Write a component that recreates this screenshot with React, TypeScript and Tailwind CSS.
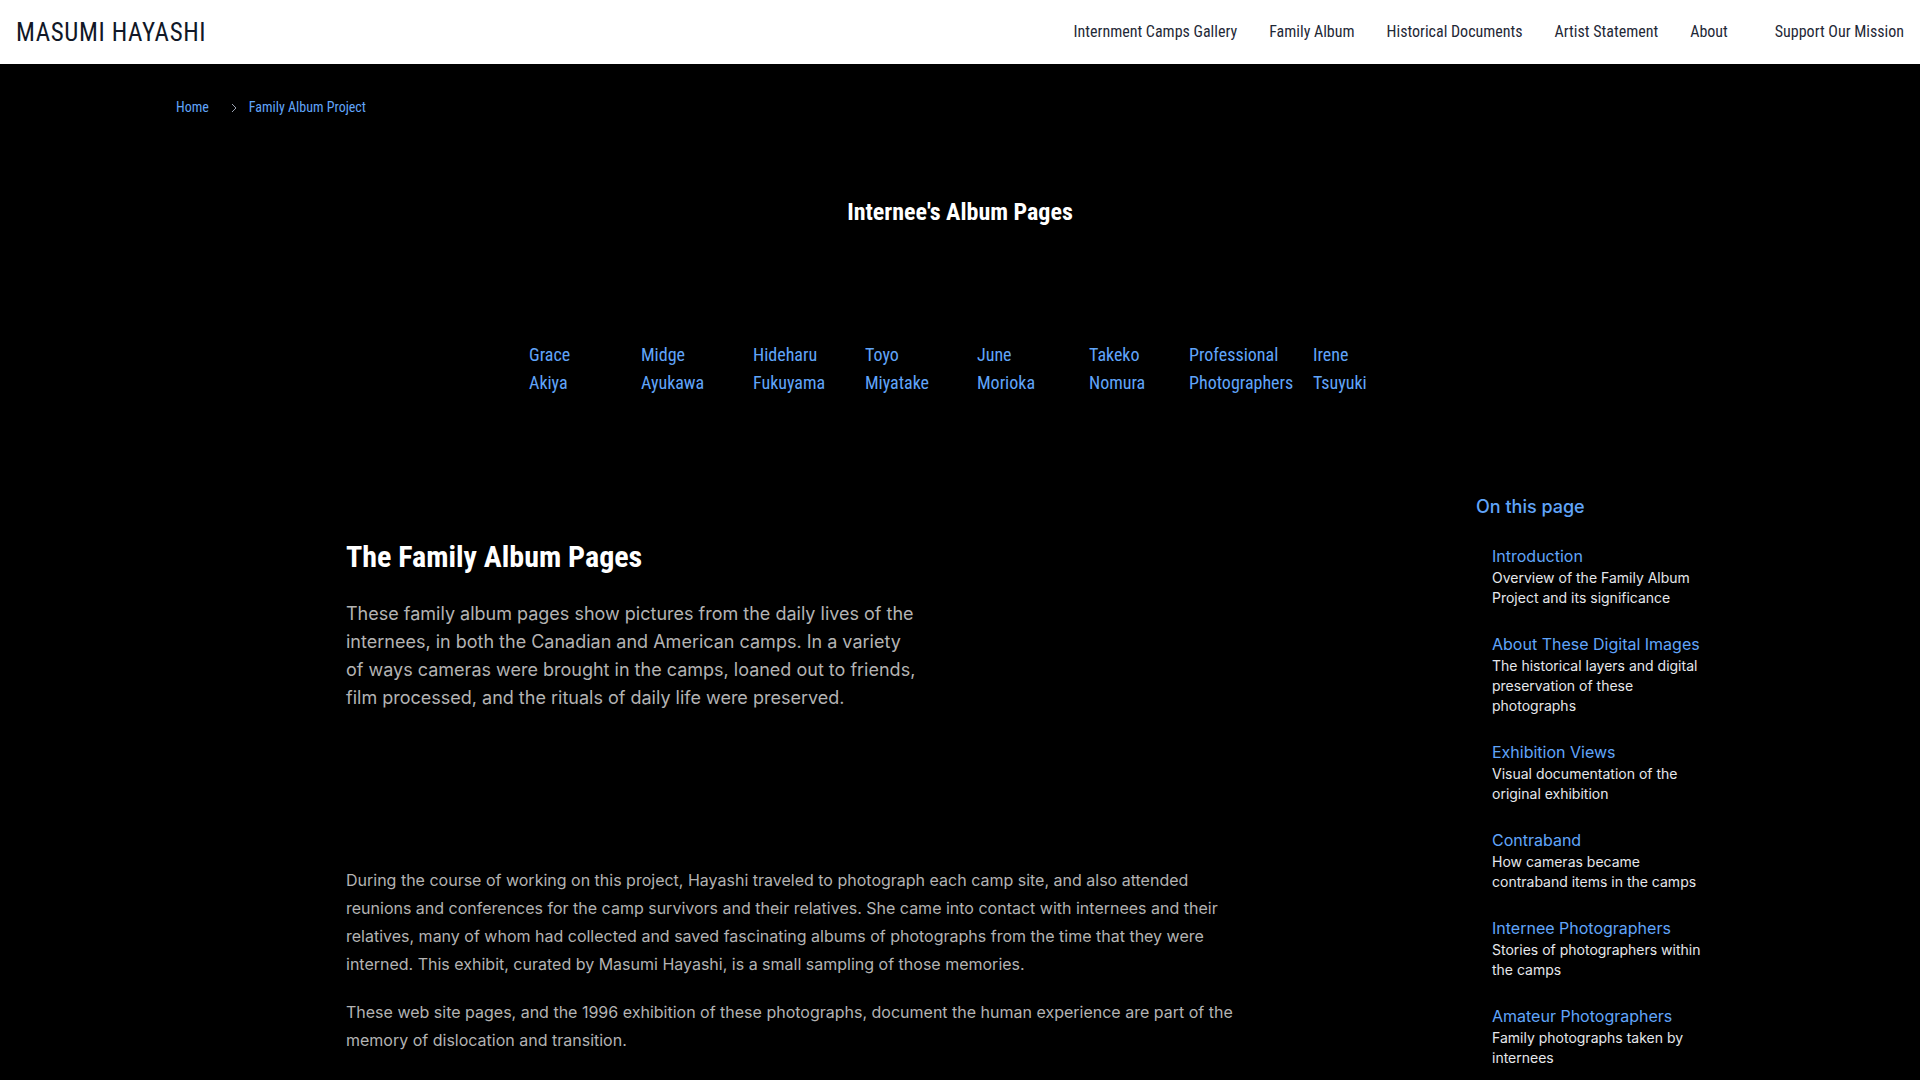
import React from "react";

const cond = "font-['Roboto_Condensed','Roboto',sans-serif] font-stretch-condensed";

const navLinks = [
  "Internment Camps Gallery",
  "Family Album",
  "Historical Documents",
  "Artist Statement",
  "About",
];

const names: { first: string; last: string; w: string }[] = [
  { first: "Grace", last: "Akiya", w: "w-[112px]" },
  { first: "Midge", last: "Ayukawa", w: "w-[112px]" },
  { first: "Hideharu", last: "Fukuyama", w: "w-[112px]" },
  { first: "Toyo", last: "Miyatake", w: "w-[112px]" },
  { first: "June", last: "Morioka", w: "w-[112px]" },
  { first: "Takeko", last: "Nomura", w: "w-[100px]" },
  { first: "Professional", last: "Photographers", w: "w-[124px]" },
  { first: "Irene", last: "Tsuyuki", w: "w-[80px]" },
];

const toc = [
  { title: "Introduction", desc: "Overview of the Family Album Project and its significance" },
  { title: "About These Digital Images", desc: "The historical layers and digital preservation of these photographs" },
  { title: "Exhibition Views", desc: "Visual documentation of the original exhibition" },
  { title: "Contraband", desc: "How cameras became contraband items in the camps" },
  { title: "Internee Photographers", desc: "Stories of photographers within the camps" },
  { title: "Amateur Photographers", desc: "Family photographs taken by internees" },
];

export default function App() {
  return (
    <div className="min-h-screen bg-black">
      {/* Header */}
      <header className={`h-16 bg-white flex items-center justify-between pl-4 pr-4 ${cond}`}>
        <a href="#" className="text-[25px] tracking-[0.025em] text-[#111827] leading-none">
          MASUMI HAYASHI
        </a>
        <nav className="flex items-center text-[16px] text-[#1f2937]">
          <div className="flex items-center gap-8">
            {navLinks.map((l) => (
              <a key={l} href="#">{l}</a>
            ))}
          </div>
          <a href="#" className="ml-[47px]">Support Our Mission</a>
        </nav>
      </header>

      {/* Breadcrumb */}
      <div className={`pl-[176px] pt-[33px] flex items-center text-[14px] text-[#60a5fa] ${cond}`}>
        <a href="#">Home</a>
        <svg className="w-4 h-4 ml-[17px] mr-[7px] text-gray-400" viewBox="0 0 24 24" fill="none" stroke="currentColor" strokeWidth="1.5">
          <path d="M9 6l6 6-6 6" />
        </svg>
        <a href="#">Family Album Project</a>
      </div>

      {/* Album pages */}
      <section className={`${cond} flex flex-col items-center`}>
        <h2 className="mt-[78px] text-[24px] font-bold text-white leading-8">Internee's Album Pages</h2>
        <div className="mt-[113px] flex text-[18px] leading-7 text-[#60a5fa] pl-[2px]">
          {names.map((n) => (
            <a key={n.first} href="#" className={`${n.w} flex flex-col`}>
              <span>{n.first}</span>
              <span>{n.last}</span>
            </a>
          ))}
        </div>
      </section>

      {/* Content */}
      <div className="flex pt-[96px] pb-10">
        <main className="pl-[346px] pt-[44px] flex-1">
          <h1 className={`${cond} text-[30px] font-bold text-white leading-10`}>The Family Album Pages</h1>
          <p className="mt-[23px] max-w-[570px] font-['Inter',sans-serif] text-[18px] leading-7 text-[#b3b3b3]">
            These family album pages show pictures from the daily lives of the internees, in both the Canadian and American camps. In a variety of ways cameras were brought in the camps, loaned out to friends, film processed, and the rituals of daily life were preserved.
          </p>

          <div className="h-[154px]" />

          <div className="font-['Inter',sans-serif] max-w-[896px] text-[16px] leading-7 text-[#b3b3b3]">
            <p className="mb-5">
              During the course of working on this project, Hayashi traveled to photograph each camp site, and also attended reunions and conferences for the camp survivors and their relatives. She came into contact with internees and their relatives, many of whom had collected and saved fascinating albums of photographs from the time that they were interned. This exhibit, curated by Masumi Hayashi, is a small sampling of those memories.
            </p>
            <p>
              These web site pages, and the 1996 exhibition of these photographs, document the human experience are part of the memory of dislocation and transition.
            </p>
          </div>
        </main>

        <aside className="w-[444px] shrink-0 font-['Inter',sans-serif]">
          <h3 className="text-[18px] font-medium text-[#60a5fa] leading-7">On this page</h3>
          <ul className="mt-[23px] pl-[16px] flex flex-col gap-6 w-[228px]">
            {toc.map((t) => (
              <li key={t.title}>
                <a href="#" className="block text-[16px] leading-6 text-[#60a5fa]">{t.title}</a>
                <p className="text-[14px] leading-5 text-[#e5e7eb]">{t.desc}</p>
              </li>
            ))}
          </ul>
        </aside>
      </div>
    </div>
  );
}
